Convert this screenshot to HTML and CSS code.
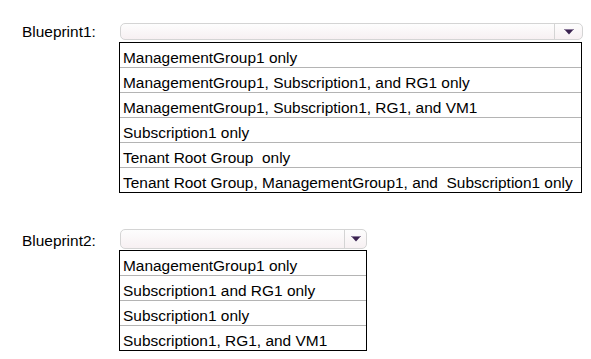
FILE: index.html
```html
<!DOCTYPE html>
<html lang="en">
<head>
  <meta charset="UTF-8" />
  <meta name="viewport" content="width=device-width, initial-scale=1.0" />
  <title>Blueprint assignment</title>
  <link rel="stylesheet" href="styles.css">
</head>
<body>
  <div class="form">
    <div class="field field-one">
      <span class="label">Blueprint1:</span>
      <div class="control">
        <div class="select">
          <span class="select-value"></span>
          <span class="select-arrow">
            <svg width="10" height="6" viewBox="0 0 10 6"><path d="M0 0H10L5 5.5Z" fill="#3b2350"/><path d="M0.5 0.5H9.5" stroke="#8a7a9a" stroke-width="1"/></svg>
          </span>
        </div>
        <ul class="options">
          <li>ManagementGroup1 only</li>
          <li>ManagementGroup1, Subscription1, and RG1 only</li>
          <li>ManagementGroup1, Subscription1, RG1, and VM1</li>
          <li>Subscription1 only</li>
          <li>Tenant Root Group&nbsp; only</li>
          <li>Tenant Root Group, ManagementGroup1, and&nbsp; Subscription1 only</li>
        </ul>
      </div>
    </div>
    <div class="field field-two">
      <span class="label">Blueprint2:</span>
      <div class="control">
        <div class="select">
          <span class="select-value"></span>
          <span class="select-arrow">
            <svg width="10" height="6" viewBox="0 0 10 6"><path d="M0 0H10L5 5.5Z" fill="#3b2350"/><path d="M0.5 0.5H9.5" stroke="#8a7a9a" stroke-width="1"/></svg>
          </span>
        </div>
        <ul class="options">
          <li>ManagementGroup1 only</li>
          <li>Subscription1 and RG1 only</li>
          <li>Subscription1 only</li>
          <li>Subscription1, RG1, and VM1</li>
        </ul>
      </div>
    </div>
  </div>
</body>
</html>
```

FILE: styles.css
```css
body {
  margin: 0;
  padding: 0;
  background: #fff;
  font-family: "Liberation Sans", Arial, sans-serif;
  font-size: 15.45px;
  color: #000;
}
.form {
  padding: 23px 0 0 22px;
}
.field {
  display: flex;
  align-items: flex-start;
}
.label {
  width: 97px;
  line-height: 17px;
}
.field-two {
  margin-top: 36px;
}
.field-two .label {
  margin-top: 3px;
}
.control {
  display: flex;
  flex-direction: column;
}
.select {
  display: flex;
  height: 15px;
  margin-left: 1px;
  border: 1px solid #d4d4d4;
  border-radius: 5px;
  background: linear-gradient(#fdfdfd, #f7f0f2);
  margin-bottom: 2px;
}
.field-two .select {
  height: 18px;
  margin-bottom: 1px;
}
.select-value {
  flex: 1;
}
.select-arrow {
  width: 27px;
  border-left: 1px solid #d4d4d4;
  display: flex;
  align-items: center;
  justify-content: center;
}
.field-one .select {
  width: 461px;
}
.field-two .select {
  width: 245px;
}
.field-two .select-arrow {
  width: 21px;
}
.options {
  list-style: none;
  margin: 0;
  padding: 0;
  border: 1px solid #000;
}
.field-one .options {
  width: 461px;
}
.field-two .options {
  width: 246px;
}
.options li {
  height: 19px;
  line-height: 19px;
  padding: 5px 0 0 3px;
  border-bottom: 1px solid #b4b4b4;
  white-space: nowrap;
}
.options li:last-child {
  border-bottom: none;
}
```
